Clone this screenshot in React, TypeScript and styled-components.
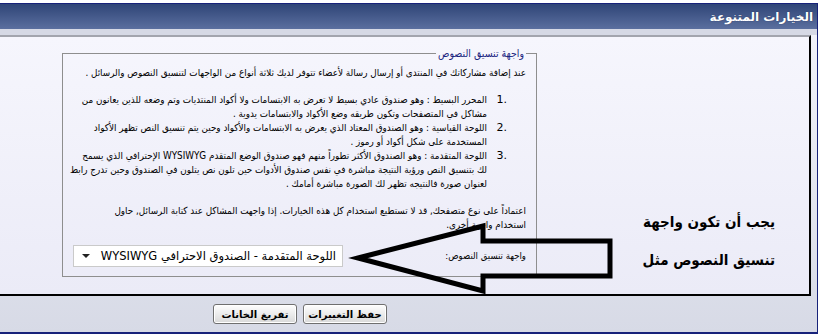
import React from 'react'
import styled, { createGlobalStyle } from 'styled-components'

const GlobalStyle = createGlobalStyle`
  html, body {
    margin: 0;
    padding: 0;
    background: #fff;
  }
  body {
    width: 818px;
    height: 334px;
    overflow: hidden;
  }
`

const ARABIC = `"DejaVu Sans", "Liberation Sans", sans-serif`
const ARABIC_NARROW = `"DejaVu Sans Condensed", "DejaVu Sans", sans-serif`

const Page = styled.div`
  position: relative;
  margin-top: 3px;
  width: 818px;
  box-sizing: border-box;
  border-top: 1px solid #17227a;
  border-right: 1px solid #17227a;
  border-bottom: 2px solid #17227a;
  background: linear-gradient(#f3f4fb, #d7dae6);
  font-family: ${ARABIC};
`

const Header = styled.div`
  direction: rtl;
  height: 25px;
  display: flex;
  align-items: center;
  padding-right: 4px;
  background: linear-gradient(#2f4577, #5b6f9f);
  color: #fff;
  font-size: 12px;
  font-weight: bold;
  text-shadow: 0 0 1px #1b2850;
`

const SubBar = styled.div`
  height: 6px;
  background: #d6d9e5;
`

const Body = styled.div`
  width: 811px;
  height: 261px;
  box-sizing: border-box;
  display: flex;
  align-items: flex-start;
  border-top: 2px solid #a3a5ae;
  border-right: 2px solid #000;
  border-bottom: 2px solid #000;
  background: linear-gradient(#f6f6fd, #ebebf7);
`

const Fieldset = styled.fieldset`
  direction: rtl;
  flex: none;
  width: 475px;
  min-width: 0;
  height: 230px;
  box-sizing: border-box;
  margin: 10px 0 0 62px;
  padding: 6px 10px 0 10px;
  border: 1px solid #8e8e8e;
  color: #000;
  font-family: ${ARABIC_NARROW};
  font-size: 9.8px;
  line-height: 14px;
`

const Legend = styled.legend`
  padding: 0 2px;
  color: #1b2580;
  font-size: 10.5px;
  line-height: 13px;
`

const Para = styled.p<{ $gap?: number }>`
  margin: ${({ $gap }) => $gap ?? 0}px 0 0;
  white-space: nowrap;
`

const Steps = styled.ol`
  list-style: none;
  margin: 13px 0 0;
  padding: 0 19px 0 0;
`

const Step = styled.li`
  display: flex;
  white-space: nowrap;
`

const StepNo = styled.span`
  flex: none;
  width: 20px;
  direction: ltr;
  text-align: right;
  font-family: ${ARABIC};
  font-size: 11px;
`

const StepText = styled.span`
  flex: 1;
`

const ChoiceRow = styled.div`
  display: flex;
  align-items: center;
  justify-content: space-between;
  margin-top: 13px;
`

const ChoiceLabel = styled.label`
  font-size: 9.5px;
`

const Select = styled.div`
  width: 270px;
  height: 22px;
  box-sizing: border-box;
  display: flex;
  align-items: center;
  padding: 0 6px 0 8px;
  border: 1px solid #cacaca;
  background: #fff;
  font-family: ${ARABIC};
  font-size: 11.5px;
  white-space: nowrap;
`

const Caret = styled.span`
  margin-right: auto;
  width: 0;
  height: 0;
  border-left: 4px solid transparent;
  border-right: 4px solid transparent;
  border-top: 4px solid #222;
`

const Note = styled.div`
  direction: rtl;
  margin: 166px 34px 0 auto;
  font-family: ${ARABIC_NARROW};
  font-size: 15px;
  font-weight: bold;
  line-height: 38px;
  color: #000;
  text-align: right;
  white-space: nowrap;
`

const Footer = styled.div`
  height: 36px;
  display: flex;
  align-items: center;
  gap: 6px;
  padding-left: 213px;
`

const Button = styled.button`
  height: 20px;
  width: 84px;
  padding: 0;
  border: 1px solid #6f6f6f;
  border-radius: 3px;
  background: linear-gradient(#fefefe, #ececec 50%, #d9d9d9);
  color: #000;
  font-family: ${ARABIC};
  font-size: 10px;
  font-weight: bold;
  box-shadow: inset 0 0 0 1px #fff;
`

const Arrow = styled.svg`
  position: absolute;
  left: 350px;
  top: 210px;
  width: 270px;
  height: 82px;
  overflow: visible;
  pointer-events: none;
`

export default function App() {
  return (
    <>
      <GlobalStyle />
      <Page>
        <Header>الخيارات المتنوعة</Header>
        <SubBar />
        <Body>
          <Fieldset>
            <Legend>واجهة تنسيق النصوص</Legend>
            <Para>
              عند إضافة مشاركاتك في المنتدى أو إرسال رسالة لأعضاء تتوفر لديك ثلاثة أنواع من الواجهات لتنسيق النصوص والرسائل .
            </Para>
            <Steps>
              <Step>
                <StepNo>1.</StepNo>
                <StepText>
                  المحرر البسيط : وهو صندوق عادي بسيط لا تعرض به الابتسامات ولا أكواد المنتديات وتم وضعه للذين يعانون من
                  <br />
                  مشاكل في المتصفحات وتكون طريقه وضع الأكواد والابتسامات يدوية .
                </StepText>
              </Step>
              <Step>
                <StepNo>2.</StepNo>
                <StepText>
                  اللوحة القياسية : وهو الصندوق المعتاد الذي يعرض به الابتسامات والأكواد وحين يتم تنسيق النص تظهر الأكواد
                  <br />
                  المستخدمة على شكل أكواد أو رموز .
                </StepText>
              </Step>
              <Step>
                <StepNo>3.</StepNo>
                <StepText>
                  اللوحة المتقدمة : وهو الصندوق الأكثر تطوراً منهم فهو صندوق الوضع المتقدم WYSIWYG الإحترافي الذي يسمح
                  <br />
                  لك بتنسيق النص ورؤية النتيجة مباشرة في نفس صندوق الأدوات حين تلون نص يتلون في الصندوق وحين تدرج رابط
                  <br />
                  لعنوان صورة فالنتيجه تظهر لك الصورة مباشرة أمامك .
                </StepText>
              </Step>
            </Steps>
            <Para $gap={13}>
              اعتماداً على نوع متصفحك, قد لا تستطيع استخدام كل هذه الخيارات. إذا واجهت المشاكل عند كتابة الرسائل, حاول
              <br />
              استخدام واجهة أخرى.
            </Para>
            <ChoiceRow>
              <ChoiceLabel>واجهة تنسيق النصوص:</ChoiceLabel>
              <Select>
                <span>اللوحة المتقدمة - الصندوق الاحترافي WYSIWYG</span>
                <Caret />
              </Select>
            </ChoiceRow>
          </Fieldset>
          <Note>
            يجب أن تكون واجهة
            <br />
            تنسيق النصوص مثل
          </Note>
        </Body>
        <Footer>
          <Button>تفريغ الخانات</Button>
          <Button>حفظ التغييرات</Button>
        </Footer>
        <Arrow viewBox="0 0 270 82">
          <path
            d="M8 44 L133 12 L133 27 L260 27 L260 62 L133 62 L133 77 Z"
            fill="none"
            stroke="#000"
            strokeWidth="5"
            strokeLinejoin="miter"
          />
        </Arrow>
      </Page>
    </>
  )
}
